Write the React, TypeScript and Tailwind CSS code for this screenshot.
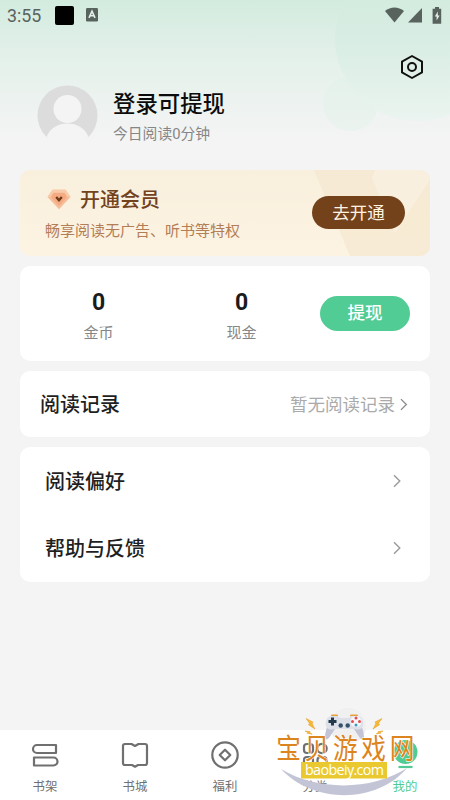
import type { ReactNode } from "react";

const FONT = "font-['Roboto','Noto_Sans_CJK_SC',sans-serif]";

function Chevron({ small }: { small?: boolean }) {
  return (
    <svg
      width={small ? 7.5 : 8}
      height={small ? 13 : 14}
      viewBox="0 0 8 14"
      fill="none"
      stroke={small ? "#8a8a8a" : "#9a9a9a"}
      strokeWidth="1.4"
    >
      <path d="M1 1.2 6.8 7 1 12.8" />
    </svg>
  );
}

function StatusBar() {
  return (
    <div className="relative flex h-[30px] items-center pl-[7px] pr-2 text-[#59635e]">
      <span className="w-12 pt-[2px] text-[17.8px] leading-none">3:55</span>
      <span className="h-[19px] w-[19px] rounded-[2px] bg-black" />
      <svg className="ml-3" width="12" height="14" viewBox="0 0 12 14">
        <rect width="12" height="13.4" rx="1.2" fill="#59635e" />
        <path d="M3 9.8 6 3.2l3 6.6M4.2 7.8h3.6" fill="none" stroke="#e4f0ea" strokeWidth="1.6" />
      </svg>
      <div className="ml-auto flex items-center gap-1">
        <svg width="19" height="16" viewBox="0 0 19 16" fill="currentColor">
          <path d="M0 4C5.5-.8 13.5-.8 19 4L9.5 15.5z" />
        </svg>
        <svg width="14" height="15" viewBox="0 0 14 15" fill="currentColor">
          <path d="M14 0v14.5H0z" />
        </svg>
        <svg className="ml-[6px]" width="10" height="17" viewBox="0 0 10 17">
          <path d="M3 0h4v1.8h2.2v15H.6v-15H3z" fill="currentColor" />
          <path d="M5.8 4.5 2.8 9.6h1.8v4l3-5.2H5.8z" fill="#e4f0ea" />
        </svg>
      </div>
    </div>
  );
}

function Profile() {
  return (
    <div className="relative h-[140px]">
      <div className="flex justify-end pr-[26px] pt-6">
        <svg width="24" height="26" viewBox="0 0 24 26" fill="none" stroke="#111" strokeWidth="2">
          <path d="M12 2 22 7.6v10.8L12 24 2 18.4V7.6z" strokeLinejoin="round" />
          <circle cx="12" cy="13" r="4" />
        </svg>
      </div>
      <div className="flex items-center pl-[37px]">
        <svg className="mt-[5px]" width="61" height="61" viewBox="0 0 61 61">
          <circle cx="30.5" cy="30.5" r="30" fill="#dcdcdc" />
          <circle cx="30.5" cy="24" r="14" fill="#f4f4f4" />
          <path d="M9.5 52C13 43 21 38.500 30.500 38.500S48 43 51.500 52C46 58 39 61 30.500 61S15 58 9.500 52z" fill="#f4f4f4" />
        </svg>
        <div className="ml-[15px] mt-[5px]">
          <div className="text-[22.4px] font-medium leading-[34px] text-[#0c0c0c]">登录可提现</div>
          <div className="mt-[2px] text-[14.8px] leading-[22px] text-[#868686]">今日阅读0分钟</div>
        </div>
      </div>
    </div>
  );
}

function VipCard() {
  return (
    <div className="relative flex h-[85.5px] items-center justify-between overflow-hidden rounded-[10px] bg-linear-to-b from-[#f8efdd] to-[#fcf3e2] px-[25px]">
      <svg className="absolute inset-0" width="410" height="86" viewBox="0 0 410 86">
        <path d="M294 0H410V86H330z" fill="#f5e8d0" opacity=".75" />
        <path d="M355 0H410V10L375 63 352 8z" fill="#f8efde" />
      </svg>
      <div className="relative">
        <div className="flex items-center">
          <svg className="ml-[2px] mt-px" width="24" height="21" viewBox="0 0 24 21">
            <path d="M5.5.8h13L23.5 8 12 20.3.5 8z" fill="#f7bd98" />
            <path d="M6.5 4h11l2.5 4-8 9L4 8z" fill="#f4aa82" />
            <path d="M5.5.8h13L23.5 8h-3l-3-4.5h-11L3.5 8h-3z" fill="#f9cba8" />
            <path d="m9.2 8 2.8 3.2L14.8 8" fill="none" stroke="#6d3818" strokeWidth="2.3" />
          </svg>
          <span className="ml-[9px] pt-[2px] text-[20px] font-medium leading-[30px] text-[#72421d]">开通会员</span>
        </div>
        <div className="mt-[4px] text-[15px] leading-[24px] text-[#b37d56]">畅享阅读无广告、听书等特权</div>
      </div>
      <button className="relative h-[33px] w-[93px] rounded-full bg-[#74421a] pt-px text-[17.5px] leading-none text-[#fff3e2]">
        去开通
      </button>
    </div>
  );
}

function Amount({ label }: { label: string }) {
  return (
    <div className="flex w-[143px] flex-col items-center pt-[5px]">
      <span className="text-[23px] font-bold leading-[30px] text-[#1b1b1b]">0</span>
      <span className="mt-[4px] text-[15px] leading-[22px] text-[#868686]">{label}</span>
    </div>
  );
}

function MenuRow({ label }: { label: string }) {
  return (
    <div className="flex h-[67.5px] items-center justify-between pl-[25px] pr-[29px]">
      <span className="pt-[2px] text-[20px] font-medium text-[#1f1f1f]">{label}</span>
      <Chevron />
    </div>
  );
}

function NavItem({ label, active, children }: { label: string; active?: boolean; children: ReactNode }) {
  return (
    <div className={`flex flex-1 flex-col items-center pt-[9px] ${active ? "text-[#50cb94]" : "text-[#707070]"}`}>
      <svg width="32" height="32" viewBox="0 0 32 32" fill="none" stroke="currentColor" strokeWidth="2.2" strokeLinejoin="round">
        {children}
      </svg>
      <span className="mt-[7px] text-[12.4px] leading-[18px]">{label}</span>
    </div>
  );
}

function BottomNav() {
  return (
    <div className="flex h-[70px] bg-white">
      <NavItem label="书架">
        <path d="M8 6h19v8H8a4 4 0 0 1 0-8zM5 18.5h19.500a4 4 0 0 1 0 8H5z" />
      </NavItem>
      <NavItem label="书城">
        <path d="M6 5h6.5l3.500 2 3.500-2H26a2 2 0 0 1 2 2v17a2 2 0 0 1-2 2h-7l-3 1.700-3-1.700H6a2 2 0 0 1-2-2V7a2 2 0 0 1 2-2z" />
      </NavItem>
      <NavItem label="福利">
        <circle cx="16" cy="16" r="12.7" />
        <path d="m16 10.7 5.3 5.3-5.3 5.3-5.3-5.3z" />
      </NavItem>
      <NavItem label="分类">
        <rect x="5" y="5" width="9" height="9" rx="3" />
        <circle cx="23" cy="9.5" r="4.7" />
        <rect x="5" y="18" width="9" height="9" rx="3" />
        <rect x="18.5" y="18" width="9" height="9" rx="3" />
      </NavItem>
      <NavItem label="我的" active>
        <circle cx="16.5" cy="13" r="12" fill="currentColor" stroke="none" />
        <path d="M9.5 28h14" />
      </NavItem>
    </div>
  );
}

function SiteLogo() {
  return (
    <svg className="absolute left-[270px] top-[700px]" width="160" height="100" viewBox="0 0 160 100">
      <circle cx="78" cy="26" r="18" fill="#f0f0f0" />
      {/* gamepad */}
      <path d="M62 15.5h5M81 15.5h6" stroke="#e6a13a" strokeWidth="2" strokeLinecap="round" />
      <path d="M60 20c-3 6-5 13-5 17 0 3 2 3 4 1l6-9h19l6 9c2 2 4 2 4-1 0-4-2-11-5-17z" fill="#c3c5d7" />
      <path d="M61 16h7c1 1.500 2 2 3 2h7c1 0 2-.5 3-2h7c4 1 6 5 5 10-1 3-4 4-8 3H64c-4 1-7 0-8-3-1-5 1-9 5-10z" fill="#dddfe9" />
      <path d="M62.5 17.5v8M58.5 21.5h8" stroke="#24384b" strokeWidth="3" />
      <circle cx="70.7" cy="25.5" r="2.2" fill="#35506b" />
      <circle cx="77.7" cy="25.5" r="2.2" fill="#35506b" />
      <circle cx="86" cy="21.5" r="5.5" fill="#f5f5fa" />
      <circle cx="86" cy="18" r="1.5" fill="#e34d4d" />
      <circle cx="86" cy="25" r="1.5" fill="#3e9bb5" />
      <circle cx="82.5" cy="21.5" r="1.5" fill="#e34d4d" />
      <circle cx="89.5" cy="21.5" r="1.5" fill="#e34d4d" />
      <g fill="#f6b931" stroke="#e39b2a" strokeWidth=".5">
        <path d="m36 18.5 7 3.5-.8 1.800 2.800 5.200-6.500-4.200 1-1.600z" />
        <path d="m112 18.5-7 3.5.8 1.800-2.800 5.200 6.500-4.200-1-1.600z" />
        <path d="m35 31 5 .5-.3 1 2.500 1.700-5-.9.3-1zM113 31l-5 .5.3 1-2.500 1.700 5-.9-.3-1z" />
      </g>
      <path d="M11 69c36 22 91 22 126-1-30 36-94 36-126 1z" fill="#c3c5d7" />
      <text
        x="7"
        y="59"
        textLength="157"
        transform="scale(.88 1)"
        fontSize="28"
        fill="#dc8420"
        stroke="#fff"
        strokeWidth="1.2"
        paintOrder="stroke"
        className="font-['Noto_Sans_CJK_SC',sans-serif]"
      >
        宝贝游戏网
      </text>
      <rect x="31" y="62" width="86" height="16.5" fill="#e9c92f" />
      <text x="35" y="74.5" textLength="79" fontSize="14.3" fontWeight="500" fill="#fff" className="font-['Open_Sans',sans-serif]">
        baobeiy.com
      </text>
    </svg>
  );
}

export default function App() {
  return (
    <div className={`relative flex h-[800px] w-[450px] flex-col overflow-hidden bg-[#f4f4f4] ${FONT}`}>
      <div className="absolute inset-x-0 top-0 h-[140px] overflow-hidden bg-linear-to-b from-[#d3ebdf] via-[#e5f1eb] via-45% to-[#f4f4f4]">
        <div className="absolute left-[323px] top-[76px] h-[55px] w-[55px] rounded-full bg-linear-to-b from-[#e4f1ea] to-[#ebf3ef]" />
        <div className="absolute left-[335px] top-[-43px] h-[164px] w-[164px] rounded-full bg-linear-to-b from-[#cfe9dc] via-[#d8ede3] via-50% to-[#ebf4f0]" />
      </div>
      <StatusBar />
      <Profile />
      <div className="relative flex flex-1 flex-col gap-[10px] px-5">
        <VipCard />
        <div className="flex h-[95.5px] items-center rounded-[10px] bg-white pl-[7px] pr-5">
          <Amount label="金币" />
          <Amount label="现金" />
          <button className="ml-auto h-[35px] w-[90px] rounded-full bg-[#52cc95] pt-px text-[17.5px] font-medium leading-none text-white">
            提现
          </button>
        </div>
        <div className="flex h-[66px] items-center rounded-[10px] bg-white pl-5 pr-[22.5px]">
          <span className="pt-[2px] text-[20px] font-medium text-[#1f1f1f]">阅读记录</span>
          <span className="ml-auto mr-[5px] pt-[2px] text-[17.5px] text-[#aaa]">暂无阅读记录</span>
          <Chevron small />
        </div>
        <div className="rounded-[10px] bg-white">
          <MenuRow label="阅读偏好" />
          <MenuRow label="帮助与反馈" />
        </div>
      </div>
      <BottomNav />
      <SiteLogo />
    </div>
  );
}
